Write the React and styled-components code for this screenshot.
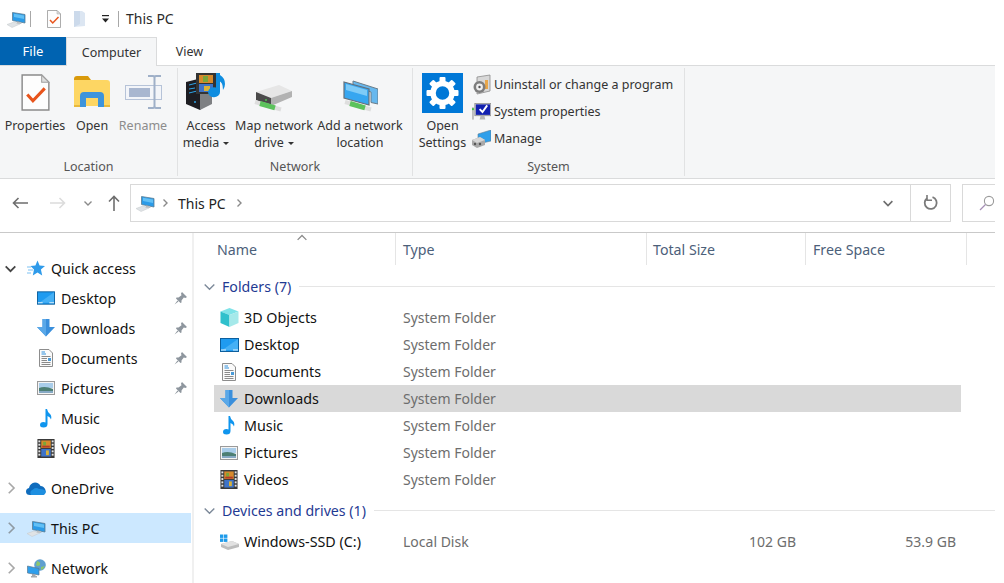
import React from 'react';
import styled, { createGlobalStyle } from 'styled-components';

const Global = createGlobalStyle`
  html, body { margin: 0; padding: 0; background: #fff; overflow: hidden; }
  body { font-family: "Noto Sans", "Open Sans", sans-serif; color: #111; }
  * { box-sizing: border-box; }
`;

const Window = styled.div`
  width: 995px;
  height: 583px;
  overflow: hidden;
  display: flex;
  flex-direction: column;
  background: #fff;
`;

/* title bar */
const TitleBar = styled.div`
  height: 37px;
  flex: none;
  display: flex;
  align-items: center;
  padding-left: 6px;
`;
const TitleSep = styled.div`
  width: 1px;
  height: 16px;
  background: #a8a8a8;
  margin: 0 ${({ $right }) => $right}px 0 ${({ $left }) => $left}px;
`;
const QuickSlot = styled.div`
  display: flex;
  align-items: center;
  margin-right: ${({ $right }) => $right}px;
`;
const TitleText = styled.span`
  font-size: 14px;
  color: #2b2b2b;
`;

/* tabs */
const TabRow = styled.div`
  height: 28px;
  flex: none;
  display: flex;
  position: relative;
  z-index: 1;
`;
const FileTab = styled.div`
  width: 66px;
  background: #0063b1;
  color: #fff;
  font-size: 13px;
  display: flex;
  align-items: center;
  justify-content: center;
`;
const Tab = styled.div`
  width: ${({ $width }) => $width}px;
  height: ${({ $active }) => ($active ? 29 : 28)}px;
  font-size: 12.5px;
  color: #333;
  display: flex;
  align-items: center;
  justify-content: center;
  background: ${({ $active }) => ($active ? '#f5f6f7' : 'transparent')};
  border: 1px solid ${({ $active }) => ($active ? '#dadbdc' : 'transparent')};
  border-bottom: none;
`;

/* ribbon */
const Ribbon = styled.div`
  height: 114px;
  flex: none;
  display: flex;
  background: #f5f6f7;
  border-top: 1px solid #dadbdc;
  border-bottom: 1px solid #dadbdc;
  padding: 2px 0;
`;
const Group = styled.div`
  width: ${({ $width }) => $width}px;
  flex: none;
  display: flex;
  flex-direction: column;
  border-right: 1px solid #e1e2e3;
`;
const GroupBody = styled.div`
  flex: 1;
  display: flex;
`;
const GroupLabel = styled.div`
  height: 18px;
  font-size: 12.5px;
  color: #555;
  text-align: center;
  line-height: 17px;
`;
const BigButton = styled.div`
  width: ${({ $width }) => $width}px;
  margin-right: ${({ $gap }) => $gap || 0}px;
  flex: none;
  display: flex;
  flex-direction: column;
  align-items: center;
  font-size: 12.5px;
  line-height: 17px;
  color: ${({ $disabled }) => ($disabled ? '#8c8c8c' : '#333')};
  text-align: center;
  white-space: nowrap;
`;
const BigIconSlot = styled.div`
  height: 47px;
  width: 100%;
  display: flex;
  justify-content: center;
  align-items: flex-end;
  padding-bottom: ${({ $bottom }) => $bottom}px;
  margin-bottom: 2px;
`;
const Caret = styled.span`
  display: inline-block;
  width: 0;
  height: 0;
  margin-left: 4px;
  vertical-align: 2px;
  border-left: 3.5px solid transparent;
  border-right: 3.5px solid transparent;
  border-top: 3.5px solid #333;
`;
const SmallList = styled.div`
  display: flex;
  flex-direction: column;
  padding-top: 3px;
`;
const SmallButton = styled.div`
  height: 27px;
  display: flex;
  align-items: center;
  gap: 3px;
  font-size: 12.5px;
  color: #333;
  white-space: nowrap;
`;

/* address bar */
const AddressRow = styled.div`
  height: 54px;
  flex: none;
  display: flex;
  align-items: flex-start;
  padding-top: 5px;
  border-bottom: 1px solid #c9c9c9;
`;
const NavButtons = styled.div`
  width: 130px;
  height: 38px;
  flex: none;
  display: flex;
  align-items: center;
  padding-left: 12px;
`;
const NavSlot = styled.div`
  display: flex;
  margin-right: ${({ $right }) => $right}px;
`;
const AddressBox = styled.div`
  width: 781px;
  height: 38px;
  flex: none;
  display: flex;
  align-items: center;
  border: 1px solid #d9d9d9;
  padding-left: 4px;
  font-size: 14px;
  color: #222;
`;
const Crumb = styled.span`
  margin-right: 5px;
`;
const CrumbChevron = styled.div`
  display: flex;
  margin: 0 ${({ $right }) => $right}px 0 ${({ $left }) => $left}px;
`;
const AddressEnd = styled.div`
  margin-left: auto;
  width: 27px;
  display: flex;
`;
const RefreshBox = styled.div`
  width: 41px;
  height: 38px;
  flex: none;
  margin-left: -1px;
  display: flex;
  align-items: center;
  justify-content: center;
  border: 1px solid #d9d9d9;
`;
const SearchBox = styled.div`
  width: 60px;
  height: 38px;
  flex: none;
  margin-left: 11px;
  display: flex;
  align-items: center;
  padding-left: 16px;
  border: 1px solid #d9d9d9;
`;

/* body */
const Body = styled.div`
  flex: 1;
  min-height: 0;
  display: flex;
`;
const Sidebar = styled.div`
  width: 194px;
  flex: none;
  border-right: 2px solid #f0f0f0;
  padding-top: 20px;
`;
const NavRow = styled.div`
  width: 191px;
  height: 30px;
  margin-top: ${({ $top }) => $top || 0}px;
  display: flex;
  align-items: center;
  font-size: 14.2px;
  color: #111;
  background: ${({ $selected }) => ($selected ? '#cce8ff' : 'transparent')};
  padding-left: ${({ $child }) => ($child ? 37 : 4)}px;
  white-space: nowrap;
`;
const NavChevron = styled.div`
  width: 13px;
  margin-right: 9px;
  display: flex;
  justify-content: center;
`;
const NavIcon = styled.div`
  width: ${({ $child }) => ($child ? 24 : 25)}px;
  padding-right: ${({ $child }) => ($child ? 6 : 5)}px;
  flex: none;
  display: flex;
  justify-content: center;
`;
const Pin = styled.div`
  margin-left: auto;
  margin-right: 4px;
  display: flex;
`;

const Main = styled.div`
  flex: 1;
  min-width: 0;
`;
const HeaderRow = styled.div`
  height: 32px;
  display: flex;
  position: relative;
`;
const HeaderCell = styled.div`
  width: ${({ $width }) => $width}px;
  padding-left: ${({ $pad }) => $pad}px;
  border-right: 1px solid #e5e5e5;
  font-size: 14.2px;
  color: #4c607a;
  display: flex;
  align-items: center;
  height: 32px;
`;
const SortMark = styled.div`
  position: absolute;
  left: 103px;
  top: 0;
  display: flex;
`;
const SectionHead = styled.div`
  height: 27px;
  margin-top: ${({ $top }) => $top}px;
  margin-bottom: 4px;
  display: flex;
  align-items: center;
  padding-left: 10px;
  font-size: 14.2px;
  color: #1f3a93;
  white-space: nowrap;
`;
const SectionChevron = styled.div`
  display: flex;
  margin-right: 7px;
`;
const SectionLine = styled.div`
  flex: 1;
  height: 1px;
  background: #e5e5e5;
  margin-left: 8px;
`;
const FileRow = styled.div`
  height: 27px;
  width: 747px;
  margin-left: 20px;
  padding: 0 5px;
  display: grid;
  grid-template-columns: 25px 159px 250px 143px 160px;
  align-items: center;
  font-size: 14px;
  background: ${({ $selected }) => ($selected ? '#d9d9d9' : 'transparent')};
`;
const RowIcon = styled.div`
  width: 20px;
  display: flex;
  justify-content: center;
`;
const RowName = styled.div`
  color: #111;
  font-size: 14.3px;
`;
const RowType = styled.div`
  color: #6d6d6d;
`;
const RowSize = styled.div`
  color: #6d6d6d;
  text-align: right;
`;

/* drawings */
const PcIcon = ({ size = 20 }) => (
  <svg width={size} height={size} viewBox="0 0 20 20">
    <path d="M1 15.5 L8 13 L14 15 L6 18.5 Z" fill="#dfe3e6" stroke="#c4c8cb" strokeWidth=".5" />
    <path d="M6.5 3.5 L19 5.5 V14 L6.5 11.5 Z" fill="#2b9be8" stroke="#5a7d94" strokeWidth=".8" />
    <path d="M8 4.8 L18 6.5 V10 L8 8 Z" fill="#62c0f5" />
    <path d="M11 12.5 L15 13.3 L15.5 15 L10.5 14.5 Z" fill="#b9bdc0" />
  </svg>
);
const CheckDocIcon = ({ w = 16, h = 18 }) => (
  <svg width={w} height={h} viewBox="0 0 28 36">
    <path d="M1 1 H20 L27 8 V35 H1 Z" fill="#fdfdfd" stroke="#8a8a8a" strokeWidth="1.4" />
    <path d="M20 1 V8 H27 Z" fill="#dedede" stroke="#a0a0a0" strokeWidth="1" />
    <path d="M6 20 L11.5 26 L23 14" fill="none" stroke="#e8541c" strokeWidth="3" />
  </svg>
);
const PaleFolderIcon = () => (
  <svg width="13" height="18" viewBox="0 0 13 18">
    <path d="M1 1 H9 L12 3 V16 L1 17 Z" fill="#dce6f2" />
    <path d="M1 1 H7 V14 L1 17 Z" fill="#ccdaeb" />
  </svg>
);
const TinyDrop = () => (
  <svg width="9" height="10" viewBox="0 0 9 10">
    <rect x="1" y="1" width="7" height="1.2" fill="#222" />
    <path d="M1 4.5 H8 L4.5 8.5 Z" fill="#222" />
  </svg>
);
const OpenFolderIcon = () => (
  <svg width="36" height="31" viewBox="0 0 36 31">
    <path d="M0 3 Q0 0 3 0 H14 L17 4 H0 Z" fill="#d99a0b" />
    <path d="M0 4 H33 Q36 4 36 7 V30 H0 Z" fill="#fdd663" />
    <path d="M6 31 V20 Q6 16 10 16 H26 Q30 16 30 20 V31 H24 V22 H12 V31 Z" fill="#3d94dc" />
    <rect x="0" y="29" width="6" height="2" fill="#e8b93b" />
    <rect x="30" y="29" width="6" height="2" fill="#e8b93b" />
  </svg>
);
const RenameIcon = () => (
  <svg width="37" height="34" viewBox="0 0 37 34">
    <rect x="0.5" y="10.5" width="36" height="14" fill="#f3f5f9" stroke="#b6c3d8" />
    <rect x="4" y="13" width="21" height="9" fill="#a9b7d0" />
    <path d="M23 1 H28 Q29.5 1 29.5 3 V31 Q29.5 33 28 33 H23 M36 1 H31 Q29.5 1 29.5 3 M36 33 H31 Q29.5 33 29.5 31" fill="none" stroke="#9fb0c8" strokeWidth="2" />
  </svg>
);
const FilmStrip = ({ w, h }) => (
  <svg width={w} height={h} viewBox="0 0 18 20">
    <rect x="0" y="0" width="18" height="20" fill="#3a3a3a" />
    <rect x="4" y="1.5" width="10" height="8" fill="#d78a2c" />
    <rect x="4" y="10.5" width="10" height="8" fill="#3f74c8" />
    <path d="M6 3 h3 v4 h-3 Z" fill="#7aa53a" />
    <path d="M9 12 h3 v5 h-3 Z" fill="#d9b23a" />
    <path d="M5 7 h8 v2 h-8 Z" fill="#b23a2a" />
    {[1, 4.5, 8, 11.5, 15].map((y) => (
      <g key={y}>
        <rect x="1" y={y + 0.5} width="2" height="2" fill="#e4e4e4" />
        <rect x="15" y={y + 0.5} width="2" height="2" fill="#e4e4e4" />
      </g>
    ))}
  </svg>
);
const MediaIcon = () => (
  <svg width="40" height="38" viewBox="0 0 40 38">
    <path d="M0 10 L20 5 V32 L14 38 L0 32 Z" fill="#1d1d22" />
    <path d="M14 14 L26 12 V32 L14 38 Z" fill="#7e8083" />
    <path d="M3 13 L11 11 M3 17 L9 16 M3 21 L11 19" stroke="#2ea3e6" strokeWidth="1" />
    <circle cx="9" cy="30" r="1" fill="#2ea3e6" />
    <rect x="10" y="1" width="20" height="21" fill="#333" />
    <rect x="13" y="3" width="14" height="8" fill="#d78a2c" />
    <rect x="13" y="12" width="14" height="8" fill="#3f74c8" />
    <rect x="17" y="4" width="5" height="6" fill="#7aa53a" />
    <rect x="18" y="14" width="6" height="5" fill="#d9b23a" />
    <path d="M34 1 V20 A6 5 0 1 1 30 15.5 V1 Z" fill="#0f8de0" />
    <path d="M34 3 Q39 6 39 12 Q39 15 37 18 Q37 10 33 9 Z" fill="#0f8de0" />
  </svg>
);
const NetConnector = ({ x, y }) => (
  <g transform={`translate(${x} ${y})`}>
    <path d="M1 2 L27 9.5" stroke="#dedede" strokeWidth="4" />
    <path d="M6 3.5 L21 7.8" stroke="#5cc25c" strokeWidth="5" />
  </g>
);
const DriveIcon = () => (
  <svg width="40" height="27" viewBox="0 0 40 27">
    <path d="M2 7 L25 0 L38 6 L17 13 Z" fill="#e6e6e6" />
    <path d="M2 7 L17 13 V21 L2 15 Z" fill="#4a4a4a" />
    <path d="M17 13 L38 6 V12 L17 21 Z" fill="#b2b2b2" />
    <circle cx="12" cy="15" r="1" fill="#4ec04e" />
    <NetConnector x={0} y={15} />
  </svg>
);
const AddNetworkIcon = () => (
  <svg width="35" height="32" viewBox="0 0 35 32">
    <path d="M10 1 L35 9 V24 L28 22.5 V12 L10 6 Z" fill="#67b8ee" stroke="#6b7d89" strokeWidth="1" />
    <path d="M1 2 L26 9 V25 L1 18 Z" fill="#36a6f0" stroke="#65707a" strokeWidth="1.2" />
    <path d="M3 4 L24 10 V16 L3 10 Z" fill="#7ecbf7" />
    <NetConnector x={1} y={20} />
  </svg>
);
const GearTile = () => (
  <svg width="41" height="40" viewBox="0 0 41 40">
    <rect width="41" height="40" fill="#0078d7" />
    <g fill="#fff" transform="translate(20.5 20)">
      {[0, 45, 90, 135, 180, 225, 270, 315].map((a) => (
        <rect key={a} x="-3" y="-16" width="6" height="7" rx="1" transform={`rotate(${a})`} />
      ))}
    </g>
    <circle cx="20.5" cy="20" r="9.5" fill="none" stroke="#fff" strokeWidth="5.5" />
  </svg>
);
const UninstallIcon = () => (
  <svg width="19" height="21" viewBox="0 0 19 21">
    <path d="M5 3 L18 1 V17 L5 20 Z" fill="#d8d8d8" stroke="#8c8c8c" strokeWidth=".8" />
    <rect x="13" y="6" width="3" height="9" fill="#e8a64a" />
    <circle cx="7.5" cy="13" r="6" fill="#7d7d7d" />
    <circle cx="7.5" cy="13" r="3.4" fill="#efefef" />
    <circle cx="7.5" cy="13" r="1.2" fill="#555" />
  </svg>
);
const SysPropsIcon = () => (
  <svg width="19" height="20" viewBox="0 0 20 20">
    <rect x="3" y="1" width="17" height="13" fill="#c8c8c8" stroke="#777" strokeWidth=".6" />
    <rect x="4" y="2" width="15" height="11" fill="#1220b0" />
    <path d="M8 7 L11 10 L16 3" fill="none" stroke="#fff" strokeWidth="2" />
    <path d="M9 14 H13 L14 18 H8 Z" fill="#b5b5b5" />
    <rect x="0" y="5" width="2" height="13" fill="#bdbdbd" />
    <rect x="0" y="6" width="2" height="2" fill="#3fc43f" />
  </svg>
);
const ManageIcon = () => (
  <svg width="19" height="18" viewBox="0 0 19 18">
    <path d="M6 4 L19 0 V11 L6 14 Z" fill="#2f9fea" stroke="#5f7f96" strokeWidth=".6" />
    <path d="M0 10 L8 7 L13 10 V15 L5 18 L0 15 Z" fill="#a9a9a9" />
    <path d="M0 10 L8 7 L13 10 L5 13 Z" fill="#d6d6d6" />
    <circle cx="3" cy="14" r="1.2" fill="#555" />
    <circle cx="8" cy="14" r="1.2" fill="#555" />
  </svg>
);
const Chevron = ({ dir = 'right', size = 8, color = '#8a8a8a', sw = 1.4 }) => {
  const d = {
    right: 'M2.5 0.5 L6 4 L2.5 7.5',
    down: 'M0.5 2.5 L4 6 L7.5 2.5',
    up: 'M0.5 5.5 L4 2 L7.5 5.5',
  }[dir];
  return (
    <svg width={size} height={size} viewBox="0 0 8 8">
      <path d={d} fill="none" stroke={color} strokeWidth={sw} />
    </svg>
  );
};
const ArrowLeft = ({ color }) => (
  <svg width="16" height="12" viewBox="0 0 16 12">
    <path d="M16 6 H1.5 M6.5 1 L1.5 6 L6.5 11" fill="none" stroke={color} strokeWidth="1.6" />
  </svg>
);
const ArrowRight = ({ color }) => (
  <svg width="16" height="12" viewBox="0 0 16 12">
    <path d="M0 6 H14.5 M9.5 1 L14.5 6 L9.5 11" fill="none" stroke={color} strokeWidth="1.6" />
  </svg>
);
const ArrowUp = () => (
  <svg width="12" height="16" viewBox="0 0 12 16">
    <path d="M6 16 V1.5 M1 6.5 L6 1.5 L11 6.5" fill="none" stroke="#6e6e6e" strokeWidth="1.6" />
  </svg>
);
const RefreshIcon = () => (
  <svg width="16" height="16" viewBox="0 0 16 16">
    <path d="M9.5 2.2 A6 6 0 1 1 4 3.2" fill="none" stroke="#7a7a7a" strokeWidth="1.8" />
    <path d="M4 0 V5.2 H9" fill="none" stroke="#7a7a7a" strokeWidth="1.6" />
  </svg>
);
const SearchIcon = () => (
  <svg width="16" height="16" viewBox="0 0 16 16">
    <circle cx="10" cy="6" r="4.6" fill="none" stroke="#9a9a9a" strokeWidth="1.1" />
    <path d="M6.5 9.5 L1 15" stroke="#a58fb5" strokeWidth="1.3" />
  </svg>
);
const StarIcon = () => (
  <svg width="20" height="17" viewBox="0 0 18 17">
    <path d="M10.5 0.5 L12.6 5.6 L18 6 L13.9 9.6 L15.2 15.5 L10.5 12.4 L5.8 15.5 L7 9.6 L3.5 6 L8.4 5.6 Z" fill="#2f9bea" />
    <path d="M0 7 H4 M1 10 H6 M0 13 H4" stroke="#7cc2f3" strokeWidth="1.1" />
  </svg>
);
const PinIcon = () => (
  <svg width="13" height="13" viewBox="0 0 13 13">
    <path d="M8 0 L13 5 L11.5 6 L9.8 5.5 L7.5 8.5 L7.5 10.5 L6.5 11 L2 6.5 L2.5 5.5 L4.5 5.5 L7.5 3.2 L7 1.5 Z" fill="#8e969e" />
    <path d="M3.5 8.5 L0.5 12.5 L4.5 9.5 Z" fill="#8e969e" />
  </svg>
);
const DesktopIcon = () => (
  <svg width="19" height="14" viewBox="0 0 19 14">
    <rect x="0.5" y="0.5" width="18" height="13" fill="#1f9bf0" stroke="#0c5f9e" />
    <path d="M1 13 L18 1 V12 H1 Z" fill="#45b0f5" />
    <path d="M1 12 H6 M13 12 H18" stroke="#e8f4fc" strokeWidth="1" />
  </svg>
);
const DownloadIcon = () => (
  <svg width="18" height="18" viewBox="0 0 18 18">
    <path d="M5.5 0 H12.5 V8 H18 L9 17.5 L0 8 H5.5 Z" fill="#3a8fdc" />
    <path d="M5.5 0 H9 V17.5 L0 8 H5.5 Z" fill="#5aa8e8" />
  </svg>
);
const DocIcon = () => (
  <svg width="14" height="18" viewBox="0 0 14 18">
    <path d="M0.5 0.5 H10 L13.5 4 V17.5 H0.5 Z" fill="#fafafa" stroke="#8d8d8d" />
    <path d="M2.5 3 H6 M2.5 5 H7" stroke="#2f8fdc" strokeWidth="1" />
    <path d="M2.5 7.5 H11.5 M2.5 9.5 H8 M2.5 11.5 H8 M2.5 13.5 H11.5 M2.5 15.5 H11.5" stroke="#8a8a8a" strokeWidth="1" />
    <rect x="9" y="9" width="3" height="3" fill="#4a9bd8" />
  </svg>
);
const PictureIcon = () => (
  <svg width="18" height="14" viewBox="0 0 18 14">
    <rect x="0.5" y="0.5" width="17" height="13" fill="#f4f4f4" stroke="#9a9a9a" />
    <rect x="2" y="2" width="14" height="5" fill="#a9cdea" />
    <path d="M2 7 Q8 4.5 16 8 V12 H2 Z" fill="#4d7f74" />
    <rect x="2" y="10" width="14" height="2" fill="#86a9c4" />
  </svg>
);
const MusicIcon = () => (
  <svg width="12" height="19" viewBox="0 0 12 19">
    <path d="M5.5 0 H7 Q7.5 3 10 5 Q12 7 11 10.5 Q10.5 8 7.5 7 V15 Q7.5 18.5 3.5 18.5 Q0 18.5 0 16 Q0 13 3.5 13 Q4.7 13 5.5 13.5 Z" fill="#0f95ee" />
  </svg>
);
const CloudIcon = () => (
  <svg width="20" height="13" viewBox="0 0 20 13">
    <path d="M4 13 Q0 13 0 9.5 Q0 6.5 3 6 Q4 1 9 0.5 Q13 0.5 14.5 4 Q18 4 19.5 8 Q20 13 16 13 Z" fill="#0f6cbd" />
    <path d="M5 13 Q3 9 7 7.5 Q10 5 13 7 Q17 6.5 19.8 9 Q20 13 16 13 Z" fill="#1e8fe0" />
  </svg>
);
const NetworkIcon = () => (
  <svg width="19" height="19" viewBox="0 0 19 19">
    <circle cx="13" cy="6" r="5.8" fill="#5f9fd0" />
    <path d="M10 2 Q14 3 13 6 Q11 8 9 6 Z M14 8 L18 7 Q17 10 14 11 Z" fill="#8cc66f" />
    <path d="M0.5 7 L12 9.5 V16 L0.5 14 Z" fill="#2f9fec" stroke="#5b7a90" strokeWidth=".7" />
    <path d="M5 15 H8.5 V17 H10 V18.5 H4 V17 H5 Z" fill="#a6aaae" />
  </svg>
);
const CubeIcon = () => (
  <svg width="19" height="19" viewBox="0 0 19 19">
    <path d="M9.5 0 L18.5 3.5 L9.5 7 L0.5 3.5 Z" fill="#7fe3e8" />
    <path d="M0.5 3.5 L9.5 7 V19 L0.5 15 Z" fill="#2fc0cc" />
    <path d="M18.5 3.5 L9.5 7 V19 L18.5 15 Z" fill="#a5e9ea" />
  </svg>
);
const SsdIcon = () => (
  <svg width="20" height="16" viewBox="0 0 20 16">
    <path d="M2 10 L13 7 L20 10 V13 L9 16 L2 13 Z" fill="#bdbdbd" />
    <path d="M2 10 L13 7 L20 10 L9 13 Z" fill="#e2e2e2" />
    <rect x="1" y="0.5" width="3.4" height="3.4" fill="#1e9bea" />
    <rect x="5" y="0.5" width="3.4" height="3.4" fill="#1e9bea" />
    <rect x="1" y="4.5" width="3.4" height="3.4" fill="#1e9bea" />
    <rect x="5" y="4.5" width="3.4" height="3.4" fill="#1e9bea" />
  </svg>
);

const folders = [
  { name: '3D Objects', icon: <CubeIcon /> },
  { name: 'Desktop', icon: <DesktopIcon /> },
  { name: 'Documents', icon: <DocIcon /> },
  { name: 'Downloads', icon: <DownloadIcon />, selected: true },
  { name: 'Music', icon: <MusicIcon /> },
  { name: 'Pictures', icon: <PictureIcon /> },
  { name: 'Videos', icon: <FilmStrip w={18} h={19} /> },
];

const quickAccess = [
  { name: 'Desktop', icon: <DesktopIcon />, pinned: true },
  { name: 'Downloads', icon: <DownloadIcon />, pinned: true },
  { name: 'Documents', icon: <DocIcon />, pinned: true },
  { name: 'Pictures', icon: <PictureIcon />, pinned: true },
  { name: 'Music', icon: <MusicIcon /> },
  { name: 'Videos', icon: <FilmStrip w={18} h={19} /> },
];

export default function App() {
  return (
    <Window>
      <Global />
      <TitleBar>
        <PcIcon />
        <TitleSep $left={4} $right={15} />
        <QuickSlot $right={11}><CheckDocIcon /></QuickSlot>
        <QuickSlot $right={15}><PaleFolderIcon /></QuickSlot>
        <QuickSlot $right={0}><TinyDrop /></QuickSlot>
        <TitleSep $left={8} $right={7} />
        <TitleText>This PC</TitleText>
      </TitleBar>

      <TabRow>
        <FileTab>File</FileTab>
        <Tab $width={91} $active>Computer</Tab>
        <Tab $width={65}>View</Tab>
      </TabRow>

      <Ribbon>
        <Group $width={178}>
          <GroupBody>
            <BigButton $width={70}>
              <BigIconSlot $bottom={4}><CheckDocIcon w={29} h={37} /></BigIconSlot>
              Properties
            </BigButton>
            <BigButton $width={44}>
              <BigIconSlot $bottom={8}><OpenFolderIcon /></BigIconSlot>
              Open
            </BigButton>
            <BigButton $width={58} $disabled>
              <BigIconSlot $bottom={6}><RenameIcon /></BigIconSlot>
              Rename
            </BigButton>
          </GroupBody>
          <GroupLabel>Location</GroupLabel>
        </Group>
        <Group $width={235}>
          <GroupBody>
            <BigButton $width={56}>
              <BigIconSlot $bottom={5}><MediaIcon /></BigIconSlot>
              <span>Access</span>
              <span>media<Caret /></span>
            </BigButton>
            <BigButton $width={80} $gap={2}>
              <BigIconSlot $bottom={3}><DriveIcon /></BigIconSlot>
              <span>Map network</span>
              <span>drive<Caret /></span>
            </BigButton>
            <BigButton $width={88}>
              <BigIconSlot $bottom={3}><AddNetworkIcon /></BigIconSlot>
              <span>Add a network</span>
              <span>location</span>
            </BigButton>
          </GroupBody>
          <GroupLabel>Network</GroupLabel>
        </Group>
        <Group $width={272}>
          <GroupBody>
            <BigButton $width={59}>
              <BigIconSlot $bottom={2}><GearTile /></BigIconSlot>
              <span>Open</span>
              <span>Settings</span>
            </BigButton>
            <SmallList>
              <SmallButton><UninstallIcon />Uninstall or change a program</SmallButton>
              <SmallButton><SysPropsIcon />System properties</SmallButton>
              <SmallButton><ManageIcon />Manage</SmallButton>
            </SmallList>
          </GroupBody>
          <GroupLabel>System</GroupLabel>
        </Group>
      </Ribbon>

      <AddressRow>
        <NavButtons>
          <NavSlot $right={22}><ArrowLeft color="#6e6e6e" /></NavSlot>
          <NavSlot $right={18}><ArrowRight color="#dcdcdc" /></NavSlot>
          <NavSlot $right={16}><Chevron dir="down" color="#8a8a8a" /></NavSlot>
          <NavSlot $right={0}><ArrowUp /></NavSlot>
        </NavButtons>
        <AddressBox>
          <PcIcon />
          <CrumbChevron $left={6} $right={9}><Chevron /></CrumbChevron>
          <Crumb>This PC</Crumb>
          <CrumbChevron $left={4} $right={0}><Chevron /></CrumbChevron>
          <AddressEnd><Chevron dir="down" size={10} color="#6e6e6e" sw={1.3} /></AddressEnd>
        </AddressBox>
        <RefreshBox><RefreshIcon /></RefreshBox>
        <SearchBox><SearchIcon /></SearchBox>
      </AddressRow>

      <Body>
        <Sidebar>
          <NavRow>
            <NavChevron><Chevron dir="down" size={11} color="#444" sw={1.3} /></NavChevron>
            <NavIcon><StarIcon /></NavIcon>
            Quick access
          </NavRow>
          {quickAccess.map((item) => (
            <NavRow $child key={item.name}>
              <NavIcon $child>{item.icon}</NavIcon>
              {item.name}
              {item.pinned && <Pin><PinIcon /></Pin>}
            </NavRow>
          ))}
          <NavRow $top={10}>
            <NavChevron><Chevron size={12} color="#a8a8a8" sw={1.1} /></NavChevron>
            <NavIcon><CloudIcon /></NavIcon>
            OneDrive
          </NavRow>
          <NavRow $top={10} $selected>
            <NavChevron><Chevron size={12} color="#8f9aa3" sw={1.1} /></NavChevron>
            <NavIcon><PcIcon /></NavIcon>
            This PC
          </NavRow>
          <NavRow $top={10}>
            <NavChevron><Chevron size={12} color="#a8a8a8" sw={1.1} /></NavChevron>
            <NavIcon><NetworkIcon /></NavIcon>
            Network
          </NavRow>
        </Sidebar>

        <Main>
          <HeaderRow>
            <HeaderCell $width={202} $pad={23}>Name</HeaderCell>
            <HeaderCell $width={251} $pad={7}>Type</HeaderCell>
            <HeaderCell $width={159} $pad={6}>Total Size</HeaderCell>
            <HeaderCell $width={161} $pad={7}>Free Space</HeaderCell>
            <SortMark><Chevron dir="up" size={10} color="#8a8a8a" sw={1} /></SortMark>
          </HeaderRow>
          <SectionHead $top={8}>
            <SectionChevron><Chevron dir="down" size={11} color="#7d8a9a" sw={1} /></SectionChevron>
            Folders (7)
            <SectionLine />
          </SectionHead>
          {folders.map((f) => (
            <FileRow key={f.name} $selected={f.selected}>
              <RowIcon>{f.icon}</RowIcon>
              <RowName>{f.name}</RowName>
              <RowType>System Folder</RowType>
            </FileRow>
          ))}
          <SectionHead $top={4}>
            <SectionChevron><Chevron dir="down" size={11} color="#7d8a9a" sw={1} /></SectionChevron>
            Devices and drives (1)
            <SectionLine />
          </SectionHead>
          <FileRow>
            <RowIcon><SsdIcon /></RowIcon>
            <RowName>Windows-SSD (C:)</RowName>
            <RowType>Local Disk</RowType>
            <RowSize>102 GB</RowSize>
            <RowSize>53.9 GB</RowSize>
          </FileRow>
        </Main>
      </Body>
    </Window>
  );
}
